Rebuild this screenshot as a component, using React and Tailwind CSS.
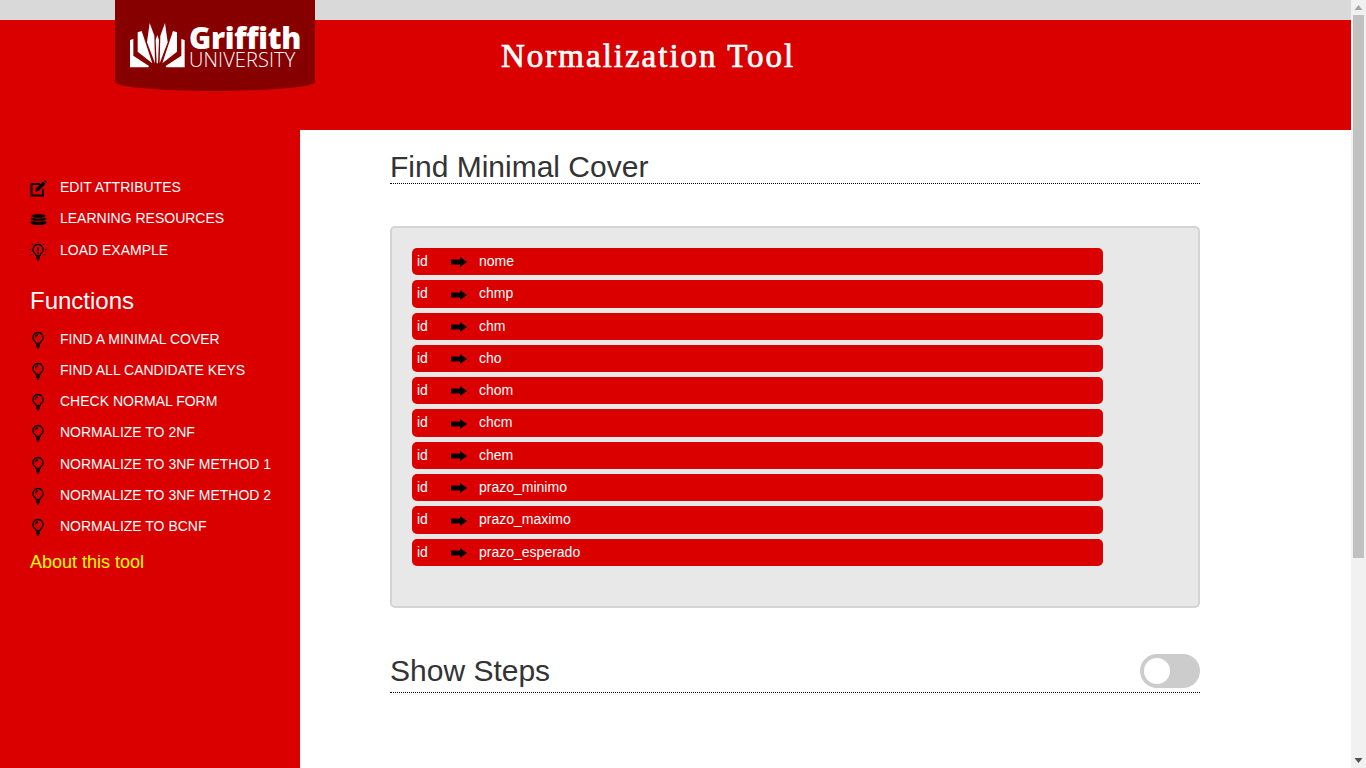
const items = ["FIND A MINIMAL COVER","FIND ALL CANDIDATE KEYS","CHECK NORMAL FORM","NORMALIZE TO 2NF","NORMALIZE TO 3NF METHOD 1","NORMALIZE TO 3NF METHOD 2","NORMALIZE TO BCNF"];
const deps = [["nome",27],["chmp",28],["chm",27],["cho",27],["chom",27],["chcm",28],["chem",27],["prazo_minimo",27],["prazo_maximo",28],["prazo_esperado",27]];

function Bulb({ rays }) {
  return (
    <svg width="18" height="20" viewBox="0 0 18 20" fill="none" stroke="#000" strokeWidth="1.3" className={rays ? "shrink-0 -translate-x-[1px] translate-y-[2px]" : "shrink-0 -translate-x-[1px] translate-y-[1px]"}>
      <path d="M9 2.500a5 5 0 0 0-3 9c.6.5.8 1 .8 1.800h4.400c0-.8.2-1.300.8-1.800a5 5 0 0 0-3-9Z" />
      <path d="M7 15h4M7.300 16.600h3.400M8 18.200h2" />
      {rays ? (
        <>
          <path d="M9 0v1.200M3 2l.9.9M15 2l-.9.9M.5 7.500h1.400M16.100 7.500h1.400M2 13l1-.8M16 13l-1-.8" />
          <path d="M9 5v4.200M9 10.200v1.300" strokeWidth="1.600" />
        </>
      ) : (
        <path d="M6.500 7.500a2.500 2.500 0 0 1 2.500-2.500" />
      )}
    </svg>
  );
}

function Edit() {
  return (
    <svg width="18" height="17" viewBox="0 0 18 17" className="shrink-0 translate-y-[1px]">
      <path d="M10 4H1.500v11.500H13V9" fill="none" stroke="#000" strokeWidth="2" />
      <path d="M5 12l1-3.500L13 1.500l2.500 2.500-7 7Z" fill="#000" />
      <path d="M14 1l1-1 2 2-1 1Z" fill="#000" />
    </svg>
  );
}

function Stack() {
  return (
    <svg width="17" height="13" viewBox="0 0 17 13" className="shrink-0 translate-y-[1px]">
      <path d="M.5 9.500C.5 6 16.500 6 16.500 9.500c0 3.500-16 3.500-16 0Z" fill="#000" />
      <path d="M.5 6C.5 2.800 16.500 2.800 16.500 6c0 3.200-16 3.200-16 0Z" fill="#000" stroke="#da0000" strokeWidth="0.8" />
      <path d="M1 3C1 0 16 0 16 3c0 3-15 3-15 0Z" fill="#000" stroke="#da0000" strokeWidth="0.8" />
    </svg>
  );
}

function Arrow({ tall }) {
  return (
    <svg width="16" height="10" viewBox="0 0 16 10" className={tall ? "mt-[7px] shrink-0" : "mt-[6px] shrink-0"}>
      <path d="M0 2.500h9V0l7 5-7 5V7.500H0Z" fill="#000" />
    </svg>
  );
}

function Logo() {
  return (
    <svg width="57" height="45" viewBox="15 14 171 135" fill="#fff" className="shrink-0">
      <path d="M15 65l10-3v50l47 31-2 4H15Z" />
      <path d="M38 42l12-4 32 97-44-35Z" />
      <path d="M74 14l14 38 2 83-24-63Z" />
      <path d="M97 50l5 15-3 70h-4l-3-70Z" />
      <path d="M120 14l-14 38-2 83 24-63Z" />
      <path d="M156 42l-12-4-32 97 44-35Z" />
      <path d="M179 65l-10-3v50l-47 31 2 4h55Z" />
    </svg>
  );
}

export default function App() {
  return (
    <div className="flex h-[768px] overflow-hidden bg-white font-['Liberation_Sans',sans-serif] text-[#333]">
      <div className="min-w-0 flex-1">
        <header className="relative h-[130px] border-t-[20px] border-[#d9d9d9] bg-[#da0000]">
          <div className="absolute left-[115px] top-[-20px] flex h-[91px] w-[200px] items-start gap-[2px] rounded-b-[100px_9px] bg-[#870000] pl-[15px] pt-[23px] text-white">
            <Logo />
            <div className="flex flex-col pt-[1px]">
              <span className="font-['Open_Sans',sans-serif] text-[30px] font-extrabold leading-[28px] tracking-[-0.3px]">Griffith</span>
              <span className="font-['Open_Sans',sans-serif] text-[20px] font-light leading-[16px] tracking-[0.1px]">UNIVERSITY</span>
            </div>
          </div>
          <h1 className="pl-[501px] pt-[17px] font-['Liberation_Serif',serif] text-[33px] font-normal leading-[38px] tracking-[2px] text-white [-webkit-text-stroke:0.7px_white]">Normalization Tool</h1>
        </header>
        <div className="flex">
          <aside className="h-[638px] w-[300px] bg-[#da0000] pl-[30px] pt-[47px] text-white">
            <div className="flex h-[20px] items-center gap-[12px] text-sm"><Edit />EDIT ATTRIBUTES</div>
            <div className="mt-[11px] flex h-[20px] items-center gap-[13px] text-sm"><Stack />LEARNING RESOURCES</div>
            <div className="mt-[12px] flex h-[20px] items-center gap-[12px] text-sm"><Bulb rays />LOAD EXAMPLE</div>
            <div className="mt-[24px] text-2xl leading-[34px]">Functions</div>
            <div className="mt-[11px] flex flex-col gap-[11px] text-sm">
              {items.map((t, i) => (
                <div key={t} className={i === 4 ? "mt-[1px] flex h-[20px] items-center gap-[12px]" : "flex h-[20px] items-center gap-[12px]"}><Bulb />{t}</div>
              ))}
            </div>
            <div className="mt-[16px] text-lg leading-[20px] text-[#ffff00]">About this tool</div>
          </aside>
          <main className="box-content w-[810px] pl-[90px] pt-[20px]">
            <h2 className="h-[34px] border-b border-dotted border-black text-[30px] leading-[34px]">Find Minimal Cover</h2>
            <div className="mt-[42px] h-[382px] rounded-[5px] border-2 border-[#d4d4d4] bg-[#e8e8e8] pl-[20px] pt-[20px]">
              <div className="flex flex-col gap-[5px]">
                {deps.map(([n, h]) => (
                  <div key={n} style={{ height: h }} className="flex w-[691px] items-start rounded-[5px] bg-[#da0000] pl-[5px] pt-[3px] text-sm leading-[20px] text-white">
                    <span className="w-[34px]">id</span>
                    <Arrow tall={h === 28} />
                    <span className="ml-[12px]">{n}</span>
                  </div>
                ))}
              </div>
            </div>
            <div className="mt-[46px] flex h-[39px] items-end justify-between border-b border-dotted border-black">
              <h2 className="pb-[4px] text-[30px] leading-[34px]">Show Steps</h2>
              <div className="mb-[4px] flex h-[34px] w-[60px] items-center rounded-full bg-[#cccccc] pl-[4px]">
                <div className="h-[26px] w-[26px] rounded-full bg-white" />
              </div>
            </div>
          </main>
        </div>
      </div>
      <div className="flex h-[768px] w-[15px] shrink-0 flex-col items-center bg-[#f1f1f1]">
        <svg width="9" height="15" viewBox="0 0 9 15" className="shrink-0">
          <path d="M4.500 5l4 5h-8Z" fill="#a3a3a3" />
        </svg>
        <div className="h-[543px] w-[11px] shrink-0 bg-[#c1c1c1]" />
        <div className="flex-1" />
        <svg width="9" height="15" viewBox="0 0 9 15" className="shrink-0">
          <path d="M4.500 10l4-5h-8Z" fill="#505050" />
        </svg>
      </div>
    </div>
  );
}
